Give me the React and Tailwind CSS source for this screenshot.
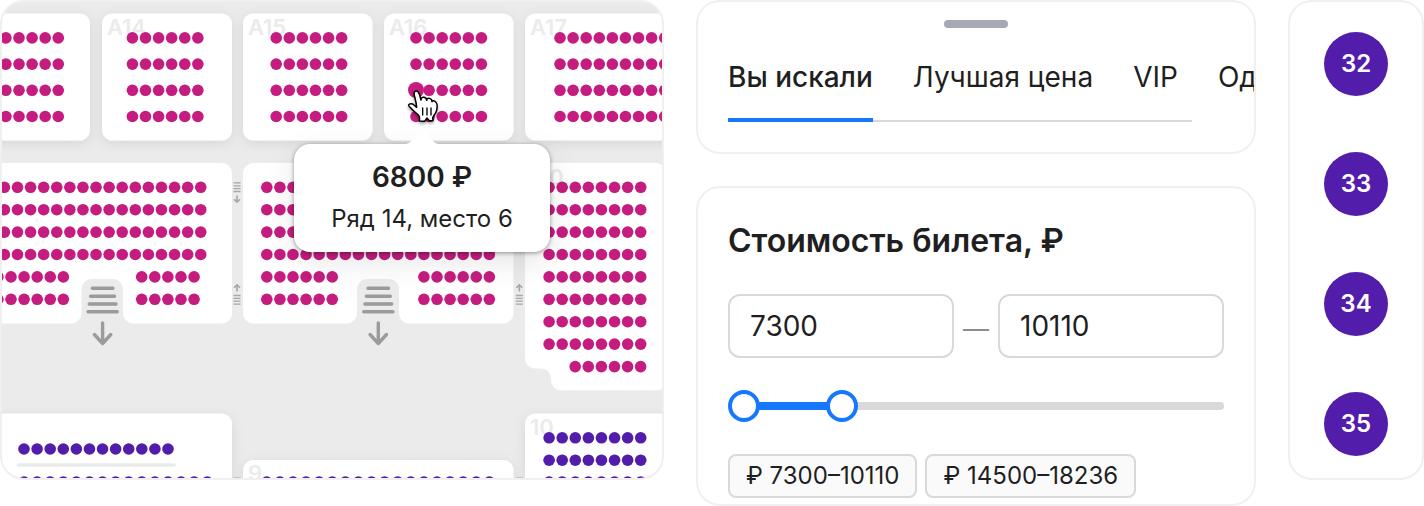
import { useState } from "react";

const MAGENTA = "#c41d7f";
const PURPLE = "#531dab";
const SEAT_GAP = 13.09;
const UPPER_ROWS = [37.9, 64.1, 90.3, 116.5];
const MIDDLE_ROWS = [187.3, 209.7, 232.1, 254.5, 276.9, 299.3, 321.7, 344.1];

function Seats({ x, rows, count, color = MAGENTA }) {
  return (
    <g fill={color}>
      {rows.map((y) =>
        Array.from({ length: count }, (_, i) => (
          <circle key={`${y}-${i}`} cx={x + i * SEAT_GAP} cy={y} r="5.8" />
        ))
      )}
    </g>
  );
}

function SectionLabel({ x, y, children }) {
  return (
    <text x={x} y={y} fill="#ebebeb" className="font-['Inter',sans-serif] text-[22px] font-semibold">
      {children}
    </text>
  );
}

function Stairs({ x }) {
  return (
    <g transform={`translate(${x} 0)`} fill="none" stroke="#9b9b9b" strokeLinecap="round" strokeLinejoin="round">
      <path strokeWidth="3.4" d="M-10.3 288.3h20.6M-12 296.3h24M-13.4 304h26.8M-14.6 311.7h29.2" />
      <path strokeWidth="3.4" d="M0 323v20.5M-8.2 334.5L0 343.5l8.2-9" />
    </g>
  );
}

function SmallStairs({ x, y, up }) {
  return (
    <g transform={`translate(${x} ${y}) scale(1 ${up ? -1 : 1})`} fill="none" stroke="#a6a6a6">
      <path strokeWidth="1.3" d="M-3.5 .8h7M-3.5 3.8h7M-3.5 6.6h7M-3.5 9.5h7" />
      <path strokeWidth="1.6" d="M0 13.5v6.500M-3 17.200l3 3 3-3" />
    </g>
  );
}

function HandCursor() {
  return (
    <g transform="translate(330 0) scale(.3333)" strokeLinejoin="round" strokeLinecap="round">
      <path
        d="M265 345C258 338 251 334 246 328C241 322 235 319 236 315C238 310 247 310 252 315L260 322C259 308 256 298 253 286C251 278 253 273 259 273C264 273 267 279 269 285L273 300C273 294 277 291 282 292C287 293 290 296 290 301C291 295 296 293 301 296C305 298 306 301 306 305C308 301 313 301 317 306C323 311 322 322 320 331C318 340 311 346 308 353L309 362H298L291 354L284 364L268 363C269 358 270 350 265 345Z"
        fill="#fff"
        stroke="#000"
        strokeWidth="4.5"
      />
      <path d="M278 324v21M291 324v21M303 324v21" fill="none" stroke="#000" strokeWidth="4" />
    </g>
  );
}

function HallMap() {
  return (
    <svg className="block h-full w-full" role="img" aria-label="Схема зала">
      <defs>
        <filter id="sectionShadow" filterUnits="userSpaceOnUse" x="-60" y="-20" width="820" height="580">
          <feDropShadow dx="0" dy="3" stdDeviation="6" floodColor="#000" floodOpacity=".09" />
        </filter>
        <filter id="cursorShadow" x="-30%" y="-30%" width="160%" height="170%">
          <feDropShadow dx="0" dy="2" stdDeviation="1.5" floodColor="#000" floodOpacity=".35" />
        </filter>
      </defs>
      <g transform="translate(-2 -2)">
        <g fill="#fff" filter="url(#sectionShadow)">
          <rect x="-40" y="13.5" width="130" height="127" rx="10" />
          <rect x="102" y="13.5" width="130" height="127" rx="10" />
          <rect x="243" y="13.5" width="129.5" height="127" rx="10" />
          <rect x="384" y="13.5" width="129.5" height="127" rx="10" />
          <rect x="525" y="13.5" width="170" height="127" rx="10" />
          <rect x="-40" y="413.5" width="272" height="120" rx="10" />
          <rect x="243" y="460" width="270.5" height="80" rx="10" />
          <rect x="525" y="413.5" width="170" height="120" rx="10" />
        </g>
        <g fill="#fff">
          <path d="M-20 163H222a10 10 0 0 1 10 10V313.5a10 10 0 0 1-10 10H133a10 10 0 0 1-10-10V289a10 10 0 0 0-10-10H91.5a10 10 0 0 0-10 10V313.5a10 10 0 0 1-10 10H-20Z" />
          <path d="M253 163H503.5a10 10 0 0 1 10 10V313.5a10 10 0 0 1-10 10H409a10 10 0 0 1-10-10V289a10 10 0 0 0-10-10H367a10 10 0 0 0-10 10V313.5a10 10 0 0 1-10 10H253a10 10 0 0 1-10-10V173a10 10 0 0 1 10-10Z" />
          <path d="M535 163H656a10 10 0 0 1 10 10V380.5a10 10 0 0 1-10 10H561a10 10 0 0 1-10-10V378.5a10 10 0 0 0-10-10H535a10 10 0 0 1-10-10V173a10 10 0 0 1 10-10Z" />
        </g>

        <SectionLabel x={107} y={35}>A14</SectionLabel>
        <SectionLabel x={248} y={35}>A15</SectionLabel>
        <SectionLabel x={389} y={35}>A16</SectionLabel>
        <SectionLabel x={530} y={35}>A17</SectionLabel>
        <SectionLabel x={525} y={185}>A10</SectionLabel>
        <SectionLabel x={530} y={435}>10</SectionLabel>
        <SectionLabel x={248} y={481}>9</SectionLabel>

        <Seats x={5.9} rows={UPPER_ROWS} count={5} />
        <Seats x={132.4} rows={UPPER_ROWS} count={6} />
        <Seats x={276.2} rows={UPPER_ROWS} count={6} />
        <Seats x={416} rows={UPPER_ROWS} count={6} />
        <Seats x={560} rows={UPPER_ROWS} count={9} />

        <Seats x={4.4} rows={MIDDLE_ROWS.slice(0, 4)} count={16} />
        <Seats x={-2.1} rows={MIDDLE_ROWS.slice(4, 6)} count={6} />
        <Seats x={141.7} rows={MIDDLE_ROWS.slice(4, 6)} count={5} />
        <Seats x={266.8} rows={MIDDLE_ROWS.slice(0, 4)} count={18} />
        <Seats x={266.8} rows={MIDDLE_ROWS.slice(4, 6)} count={6} />
        <Seats x={423.9} rows={MIDDLE_ROWS.slice(4, 6)} count={6} />
        <Seats x={549.1} rows={MIDDLE_ROWS} count={8} />
        <Seats x={575.2} rows={[366.6]} count={6} />

        <Seats x={24} rows={[449]} count={12} color={PURPLE} />
        <path d="M18.5 465H174" stroke="#ebebeb" strokeWidth="3.6" strokeLinecap="round" />
        <Seats x={24} rows={[482]} count={15} color={PURPLE} />
        <Seats x={266.8} rows={[482]} count={18} color={PURPLE} />
        <Seats x={549.1} rows={[437.8, 460.2, 482]} count={8} color={PURPLE} />

        <Stairs x={102.6} />
        <Stairs x={378.3} />
        <SmallStairs x={237} y={182} />
        <SmallStairs x={237} y={305} up />
        <SmallStairs x={519.3} y={182} />
        <SmallStairs x={519.3} y={305} up />
        <path d="M233.5 477.5h7M516 477.5h7" stroke="#c4c4c4" />

        <circle cx="416" cy="90" r="8" fill={MAGENTA} />
        <g filter="url(#cursorShadow)">
          <HandCursor />
        </g>
      </g>
    </svg>
  );
}

function SeatTooltip() {
  return (
    <div
      role="tooltip"
      className="absolute top-[142px] left-[292px] w-64 rounded-2xl bg-white py-3 text-center leading-[42px] shadow-[0_1px_4px_rgba(0,0,0,0.4),0_10px_32px_rgba(0,0,0,0.1)]"
    >
      <svg className="absolute bottom-full left-1/2 -ml-4 h-4 w-8" viewBox="0 0 32 16" aria-hidden="true">
        <path d="M0 16C2 15.5 3 15 4.500 13.500L13.500 4Q16 1.500 18.500 4L27.500 13.500C29 15 30 15.500 32 16Z" fill="#fff" />
      </svg>
      <p className="text-[28px] leading-[42px] font-semibold">6800 ₽</p>
      <p className="text-2xl leading-[42px]">Ряд 14, место 6</p>
    </div>
  );
}

const TABS = ["Вы искали", "Лучшая цена", "VIP", "Один"];

function OfferTabs() {
  const [active, setActive] = useState(0);
  return (
    <section className="overflow-hidden rounded-3xl border-2 border-[#f0f0f0] px-[30px] pt-[18px] pb-[30px]">
      <div className="mx-auto h-2 w-16 rounded-full bg-[#a6aab4]" />
      <div className="mr-8 border-b-2 border-[#d9d9d9] pt-[27px]">
        <div role="tablist" className="-mb-0.5 flex gap-10">
          {TABS.map((label, i) => (
            <button
              key={label}
              type="button"
              role="tab"
              aria-selected={i === active}
              onClick={() => setActive(i)}
              className={
                i === active
                  ? "shrink-0 border-b-4 border-[#1677ff] pb-[19px] text-[28px] leading-[44px] font-medium whitespace-nowrap"
                  : "shrink-0 border-b-4 border-transparent pb-[19px] text-[28px] leading-[44px] whitespace-nowrap"
              }
            >
              {label}
            </button>
          ))}
        </div>
      </div>
    </section>
  );
}

const MIN_PRICE = 7300;
const MAX_PRICE = 20605;

const PRESETS = [
  [7300, 10110],
  [14500, 18236],
];

const INPUT =
  "h-16 w-full min-w-0 flex-1 rounded-xl border-2 border-[#d9d9d9] bg-white px-5 text-[28px] outline-none focus:border-[#1677ff]";

const RANGE =
  "pointer-events-none absolute inset-0 m-0 h-8 w-full appearance-none bg-transparent outline-none [&::-webkit-slider-thumb]:pointer-events-auto [&::-webkit-slider-thumb]:size-8 [&::-webkit-slider-thumb]:appearance-none [&::-webkit-slider-thumb]:rounded-full [&::-webkit-slider-thumb]:border-4 [&::-webkit-slider-thumb]:border-solid [&::-webkit-slider-thumb]:border-[#1677ff] [&::-webkit-slider-thumb]:bg-white";

const share = (value) =>
  (Math.min(Math.max(value, MIN_PRICE), MAX_PRICE) - MIN_PRICE) / (MAX_PRICE - MIN_PRICE);

function PriceFilter() {
  const [[from, to], setRange] = useState(PRESETS[0]);
  return (
    <section className="rounded-3xl border-2 border-[#f0f0f0] px-[30px] pt-[29px] pb-1.5">
      <h2 className="text-[32px] leading-[48px] font-semibold">Стоимость билета, ₽</h2>
      <div className="mt-[29px] flex items-center">
        <input
          type="text"
          inputMode="numeric"
          aria-label="Цена от"
          value={from}
          onChange={(e) => setRange([Number(e.target.value) || 0, to])}
          className={INPUT}
        />
        <span className="w-11 pt-1 text-center text-[26px] text-[#8c8c8c]">—</span>
        <input
          type="text"
          inputMode="numeric"
          aria-label="Цена до"
          value={to}
          onChange={(e) => setRange([from, Number(e.target.value) || 0])}
          className={INPUT}
        />
      </div>
      <div className="relative mt-8 flex h-8 items-center rounded-full">
        <div className="h-2 w-full rounded-full bg-[#d9d9d9] px-4">
          <div
            className="h-2 bg-[#1677ff]"
            style={{
              marginLeft: `${share(from) * 100}%`,
              width: `${Math.max(share(to) - share(from), 0) * 100}%`,
            }}
          />
        </div>
        <input
          type="range"
          aria-label="Минимальная цена"
          min={MIN_PRICE}
          max={MAX_PRICE}
          value={from}
          onChange={(e) => setRange([Math.min(Number(e.target.value), to), to])}
          className={RANGE}
        />
        <input
          type="range"
          aria-label="Максимальная цена"
          min={MIN_PRICE}
          max={MAX_PRICE}
          value={to}
          onChange={(e) => setRange([from, Math.max(Number(e.target.value), from)])}
          className={RANGE}
        />
      </div>
      <div className="mt-8 flex gap-2">
        {PRESETS.map((preset) => (
          <button
            key={preset[0]}
            type="button"
            onClick={() => setRange(preset)}
            className="rounded-lg border-2 border-[#d9d9d9] bg-[#fafafa] px-4 text-2xl leading-10 whitespace-nowrap"
          >
            ₽ {preset[0]}–{preset[1]}
          </button>
        ))}
      </div>
    </section>
  );
}

export default function App() {
  return (
    <main className="grid grid-cols-[664fr_560fr_136fr] items-start gap-8 bg-white font-['Inter',sans-serif] text-[#1f1f1f]">
      <section className="relative h-[480px] overflow-hidden rounded-3xl border-2 border-[#f0f0f0] bg-[#ebebeb]">
        <HallMap />
        <SeatTooltip />
      </section>
      <div className="flex min-w-0 flex-col gap-8">
        <OfferTabs />
        <PriceFilter />
      </div>
      <section
        aria-label="Места"
        className="flex flex-col items-center gap-14 rounded-3xl border-2 border-[#f0f0f0] pt-[30px] pb-[22px]"
      >
        {[32, 33, 34, 35].map((seat) => (
          <button
            key={seat}
            type="button"
            className="flex size-16 items-center justify-center rounded-full bg-[#531dab] text-2xl font-semibold text-white"
          >
            {seat}
          </button>
        ))}
      </section>
    </main>
  );
}
